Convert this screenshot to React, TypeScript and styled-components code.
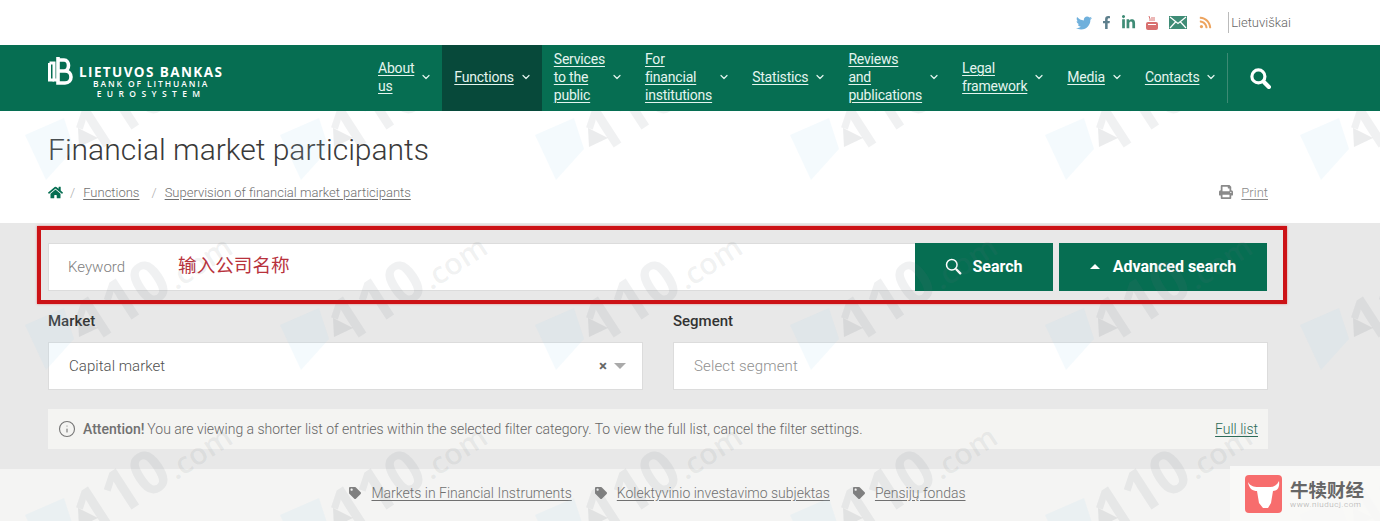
import React from 'react'
import styled, { createGlobalStyle } from 'styled-components'
import { ChevronDown, Info } from 'lucide-react'
import { FaFacebookF, FaHome, FaLinkedinIn, FaPrint, FaRss, FaTag, FaTwitter } from 'react-icons/fa'

const GlobalStyle = createGlobalStyle`
    html, body {
        margin: 0;
        padding: 0;
        background: #fff;
        font-family: Roboto, 'Noto Sans CJK SC', sans-serif;
    }
`
const Page = styled.div`
    position: relative;
    width: 1380px;
    height: 521px;
    overflow: hidden;
    color: #333;
`
const TopBar = styled.div`
    height: 45px;
    display: flex;
    justify-content: flex-end;
    align-items: center;
    padding-right: 89px;
    box-sizing: border-box;
`
const Socials = styled.div`
    display: flex;
    align-items: center;
    height: 21px;
    margin-right: 16px;
`
const Social = styled.a<{ $color: string; $gap: number }>`
    display: flex;
    color: ${p => p.$color};
    margin-right: ${p => p.$gap}px;
`
const Lang = styled.a`
    border-left: 1px solid #bbb;
    height: 21px;
    line-height: 21px;
    padding-left: 2px;
    font-size: 13px;
    font-weight: 300;
    color: #666;
`
const Header = styled.header`
    position: relative;
    z-index: 3;
    height: 66px;
    background: #066e52;
    display: flex;
    align-items: stretch;
    padding-left: 48px;
`
const Brand = styled.div`
    display: flex;
    align-items: flex-start;
    width: 318px;
    padding-top: 12px;
    box-sizing: border-box;
    color: #fff;
`
const BrandText = styled.div`
    margin-left: 5px;
    padding-top: 8px;
    font-family: 'Open Sans', sans-serif;
    text-align: center;
`
const BrandName = styled.div`
    font-size: 13.5px;
    line-height: 14px;
    font-weight: 700;
    letter-spacing: 1.4px;
    white-space: nowrap;
`
const BrandSub = styled.div<{ $spacing: number }>`
    font-size: 8.5px;
    line-height: 10px;
    font-weight: 600;
    letter-spacing: ${p => p.$spacing}px;
    white-space: nowrap;
`
const Nav = styled.nav`
    display: flex;
    align-items: stretch;
`
const NavItem = styled.div<{ $active?: boolean }>`
    display: flex;
    align-items: center;
    padding: 0 10px 2px 12px;
    background: ${p => (p.$active ? '#07493a' : 'transparent')};
    color: #e4f5ef;
    svg {
        margin-left: 6px;
    }
`
const NavLink = styled.a`
    font-size: 14px;
    line-height: 18px;
    letter-spacing: -0.2px;
    text-decoration: underline;
    text-underline-offset: 2px;
    text-decoration-thickness: 1px;
    white-space: nowrap;
`
const SearchSlot = styled.div`
    align-self: center;
    height: 50px;
    padding-left: 22px;
    border-left: 1px solid #3d8a74;
    display: flex;
    align-items: center;
`
const TitleArea = styled.div`
    height: 112px;
    padding: 20px 112px 0 48px;
    box-sizing: border-box;
`
const Title = styled.h1`
    margin: 0;
    font-size: 30px;
    line-height: 37px;
    font-weight: 300;
    color: #3a3a3a;
`
const CrumbRow = styled.div`
    display: flex;
    align-items: center;
    margin-top: 14px;
    height: 20px;
    font-size: 13px;
    font-weight: 300;
    color: #707070;
`
const CrumbLink = styled.a`
    text-decoration: underline;
    text-underline-offset: 2px;
`
const Slash = styled.span<{ $wide?: boolean }>`
    margin: 0 8px 0 ${p => (p.$wide ? 12 : 7)}px;
    color: #aaa;
`
const PrintLink = styled.div`
    margin-left: auto;
    display: flex;
    align-items: center;
    gap: 8px;
    color: #8a8a8a;
`
const Filters = styled.section`
    height: 246px;
    background: #e8e8e8;
    padding: 20px 112px 0 48px;
    box-sizing: border-box;
`
const SearchRow = styled.div`
    display: flex;
    height: 48px;
    margin-right: 1px;
`
const KeywordBox = styled.div`
    flex: 1;
    display: flex;
    align-items: center;
    background: #fff;
    border: 1px solid #dcdcdc;
    border-right: 0;
    box-sizing: border-box;
    padding-left: 19px;
    padding-bottom: 1px;
    font-size: 15px;
    font-weight: 300;
    color: #808080;
`
const Annotation = styled.span`
    margin-left: 53px;
    margin-top: -6px;
    font-size: 18.6px;
    font-weight: 400;
    color: #b8323c;
`
const ActionButton = styled.button<{ $width: number }>`
    width: ${p => p.$width}px;
    border: 0;
    background: #066e52;
    color: #fff;
    font-family: inherit;
    font-size: 16px;
    font-weight: 700;
    display: flex;
    align-items: center;
    justify-content: center;
    gap: 10px;
    padding: 0 0 2px;
`
const AdvancedButton = styled(ActionButton)`
    margin-left: 6px;
    gap: 13px;
`
const UpArrow = styled.span`
    width: 0;
    height: 0;
    border-left: 5px solid transparent;
    border-right: 5px solid transparent;
    border-bottom: 5px solid #fff;
`
const RedFrame = styled.div`
    position: absolute;
    z-index: 2;
    left: 37px;
    top: 226px;
    width: 1250px;
    height: 78px;
    box-sizing: border-box;
    border: 4px solid #cc1216;
    box-shadow: 0 0 2px rgba(220, 30, 30, 0.5);
`
const FieldGrid = styled.div`
    display: grid;
    grid-template-columns: 595px 595px;
    column-gap: 30px;
    margin-top: 20px;
`
const FieldLabel = styled.div`
    font-size: 15px;
    line-height: 20px;
    font-weight: 500;
    color: #333;
    margin-bottom: 11px;
`
const SelectBox = styled.div<{ $placeholder?: boolean }>`
    height: 48px;
    background: #fff;
    border: 1px solid #dcdcdc;
    box-sizing: border-box;
    padding: 0 16px 0 20px;
    display: flex;
    align-items: center;
    font-size: 15px;
    font-weight: 300;
    letter-spacing: ${p => (p.$placeholder ? 0.15 : 0.05)}px;
    color: ${p => (p.$placeholder ? '#909090' : '#505050')};
`
const ClearMark = styled.span`
    margin-left: auto;
    font-size: 15px;
    font-weight: 700;
    color: #666;
`
const DownArrow = styled.span`
    margin-left: 7px;
    width: 0;
    height: 0;
    border-left: 6px solid transparent;
    border-right: 6px solid transparent;
    border-top: 6px solid #aaa;
`
const Notice = styled.div`
    margin-top: 19px;
    height: 40px;
    background: #f4f4f2;
    display: flex;
    align-items: center;
    padding: 0 10px;
    font-size: 14px;
    font-weight: 300;
    letter-spacing: -0.01px;
    color: #666;
    svg {
        margin-right: 7px;
        color: #777;
    }
    strong {
        font-weight: 500;
        margin-right: 3px;
        color: #707070;
    }
`
const FullList = styled.a`
    margin-left: auto;
    color: #2c6a58;
    text-decoration: underline;
    text-underline-offset: 2px;
`
const TagStrip = styled.div`
    height: 52px;
    background: #f4f4f3;
    display: flex;
    justify-content: center;
    align-items: center;
    gap: 23px;
    padding: 0 65px 4px 0;
    box-sizing: border-box;
    font-size: 14px;
    font-weight: 300;
    color: #707070;
`
const TagLink = styled.a`
    display: flex;
    align-items: center;
    gap: 10px;
    span {
        text-decoration: underline;
        text-underline-offset: 2px;
    }
    svg {
        color: #808080;
    }
`
const Watermarks = styled.div`
    position: absolute;
    z-index: 1;
    inset: 0;
    padding: 15px 0 0 2px;
    display: grid;
    grid-template-columns: repeat(6, 255px);
    grid-auto-rows: 190px;
    pointer-events: none;
`
const Mark = styled.div`
    position: relative;
`
const MarkLogoSlot = styled.div`
    position: absolute;
    left: 20px;
    top: 100px;
    display: flex;
`
const MarkText = styled.div`
    position: absolute;
    left: 148px;
    top: 75px;
    transform: translate(-50%, -50%) rotate(-33deg);
    display: flex;
    align-items: baseline;
    color: rgba(110, 120, 125, 0.1);
    white-space: nowrap;
    font-family: 'Open Sans', sans-serif;
`
const MarkNumber = styled.span`
    font-size: 60px;
    font-weight: 700;
    letter-spacing: -1px;
`
const MarkSuffix = styled.span`
    font-size: 30px;
    font-weight: 600;
    margin-left: 2px;
`
const Badge = styled.div`
    position: absolute;
    z-index: 4;
    right: 0;
    bottom: 0;
    width: 150px;
    height: 55px;
    background: rgba(248, 248, 247, 0.92);
    display: flex;
    align-items: center;
    padding-left: 15px;
    box-sizing: border-box;
    gap: 8px;
`
const BadgeText = styled.div`
    display: flex;
    flex-direction: column;
`
const BadgeName = styled.div`
    font-family: 'Noto Sans CJK SC', sans-serif;
    font-size: 18.5px;
    line-height: 22px;
    font-weight: 700;
    color: #666;
`
const BadgeUrl = styled.div`
    font-size: 8px;
    line-height: 10px;
    letter-spacing: 0.6px;
    font-weight: 300;
    color: #aaa;
`

const navItems: { lines: string[]; active?: boolean }[] = [
    { lines: ['About', 'us'] },
    { lines: ['Functions'], active: true },
    { lines: ['Services', 'to the', 'public'] },
    { lines: ['For', 'financial', 'institutions'] },
    { lines: ['Statistics'] },
    { lines: ['Reviews', 'and', 'publications'] },
    { lines: ['Legal', 'framework'] },
    { lines: ['Media'] },
    { lines: ['Contacts'] },
]

const Magnifier: React.FC<{ size: number; stroke: number }> = ({ size, stroke }) => (
    <svg width={size} height={size} viewBox="0 0 20 20" fill="none" stroke="#fff">
        <circle cx="8" cy="8" r="6.2" strokeWidth={stroke} />
        <path d="M13.5 13.5 L18 18" strokeWidth={stroke + 1} strokeLinecap="round" />
    </svg>
)

const LogoMark = () => (
    <svg width="26" height="31" viewBox="0 0 26 31" fill="none" stroke="#fff">
        <path d="M1.5 6 H6 V23 H9" strokeWidth="3" />
        <path d="M1.5 6 V23 H6" strokeWidth="3" />
        <path d="M10 0 V26 H17 C25 26 25 14 17 14 H10 M10 3 H16 C22 3 22 14 16 14" strokeWidth="3.6" />
    </svg>
)

const MailIcon = () => (
    <svg width="18" height="13" viewBox="0 0 18 13">
        <rect width="18" height="13" fill="#3f8c76" />
        <path d="M1 1 L9 7.5 L17 1 M1 12 L6.5 6 M17 12 L11.5 6" fill="none" stroke="#fff" strokeWidth="1.2" />
    </svg>
)

const TubeIcon = () => (
    <svg width="12" height="14" viewBox="0 0 12 14">
        <path d="M3 0 L4 3 V5 M6 1 V5 M8 1 V5" stroke="#d9706f" strokeWidth="1" fill="none" />
        <rect y="6" width="12" height="8" rx="2" fill="#d9706f" />
        <rect x="2" y="8" width="8" height="1" fill="#fff" />
    </svg>
)

const MarkLogo = () => (
    <svg width="92" height="70" viewBox="0 0 92 70">
        <path d="M3 20 L42 3 L52 34 L24 65 Z" fill="rgba(170, 215, 240, 0.13)" />
        <path d="M56 13 L76 23 L57 32 Z" fill="rgba(110, 120, 125, 0.14)" />
    </svg>
)

const BullLogo = () => (
    <svg width="37" height="38" viewBox="0 0 37 38">
        <rect width="37" height="38" rx="4" fill="#f76d6d" />
        <path d="M3 7 C4 14 8 16 12 16 L14 28 L18 33 L23 33 L26 28 L28 16 C32 16 35 13 34 6 C32 10 29 12 25 12 H13 C9 12 5 11 3 7 Z" fill="#fff" />
    </svg>
)

const App: React.FC = () => {
    return (
        <Page>
            <GlobalStyle />
            <Watermarks>
                {Array.from({ length: 18 }, (_, i) => (
                    <Mark key={i}>
                        <MarkLogoSlot><MarkLogo /></MarkLogoSlot>
                        <MarkText>
                            <MarkNumber>110</MarkNumber>
                            <MarkSuffix>.com</MarkSuffix>
                        </MarkText>
                    </Mark>
                ))}
            </Watermarks>
            <TopBar>
                <Socials>
                    <Social $color="#6fb0dc" $gap={8}><FaTwitter size={16} /></Social>
                    <Social $color="#5d7f8c" $gap={8}><FaFacebookF size={13} /></Social>
                    <Social $color="#3f8c76" $gap={10}><FaLinkedinIn size={15} /></Social>
                    <Social $color="#d9706f" $gap={11}><TubeIcon /></Social>
                    <Social $color="#3f8c76" $gap={12}><MailIcon /></Social>
                    <Social $color="#eda45f" $gap={0}><FaRss size={13} /></Social>
                </Socials>
                <Lang>Lietuviškai</Lang>
            </TopBar>
            <Header>
                <Brand>
                    <LogoMark />
                    <BrandText>
                        <BrandName>LIETUVOS BANKAS</BrandName>
                        <BrandSub $spacing={1.9}>BANK OF LITHUANIA</BrandSub>
                        <BrandSub $spacing={5.4}>EUROSYSTEM</BrandSub>
                    </BrandText>
                </Brand>
                <Nav>
                    {navItems.map(item => (
                        <NavItem key={item.lines[0]} $active={item.active}>
                            <NavLink>
                                {item.lines.map((line, i) => (
                                    <React.Fragment key={line}>
                                        {i > 0 && <br />}
                                        {line}
                                    </React.Fragment>
                                ))}
                            </NavLink>
                            <ChevronDown size={12} strokeWidth={2.4} />
                        </NavItem>
                    ))}
                </Nav>
                <SearchSlot>
                    <Magnifier size={21} stroke={3} />
                </SearchSlot>
            </Header>
            <TitleArea>
                <Title>Financial market participants</Title>
                <CrumbRow>
                    <FaHome size={15} color="#066e52" />
                    <Slash>/</Slash>
                    <CrumbLink>Functions</CrumbLink>
                    <Slash $wide>/</Slash>
                    <CrumbLink>Supervision of financial market participants</CrumbLink>
                    <PrintLink>
                        <FaPrint size={14} />
                        <CrumbLink>Print</CrumbLink>
                    </PrintLink>
                </CrumbRow>
            </TitleArea>
            <Filters>
                <SearchRow>
                    <KeywordBox>
                        Keyword
                        <Annotation>输入公司名称</Annotation>
                    </KeywordBox>
                    <ActionButton $width={138}>
                        <Magnifier size={17} stroke={1.8} />
                        Search
                    </ActionButton>
                    <AdvancedButton $width={208}>
                        <UpArrow />
                        Advanced search
                    </AdvancedButton>
                </SearchRow>
                <FieldGrid>
                    <div>
                        <FieldLabel>Market</FieldLabel>
                        <SelectBox>
                            Capital market
                            <ClearMark>×</ClearMark>
                            <DownArrow />
                        </SelectBox>
                    </div>
                    <div>
                        <FieldLabel>Segment</FieldLabel>
                        <SelectBox $placeholder>Select segment</SelectBox>
                    </div>
                </FieldGrid>
                <Notice>
                    <Info size={18} strokeWidth={1.5} />
                    <strong>Attention!</strong>
                    You are viewing a shorter list of entries within the selected filter category. To view the full list, cancel the filter settings.
                    <FullList>Full list</FullList>
                </Notice>
            </Filters>
            <RedFrame />
            <TagStrip>
                <TagLink><FaTag size={12} /><span>Markets in Financial Instruments</span></TagLink>
                <TagLink><FaTag size={12} /><span>Kolektyvinio investavimo subjektas</span></TagLink>
                <TagLink><FaTag size={12} /><span>Pensijų fondas</span></TagLink>
            </TagStrip>
            <Badge>
                <BullLogo />
                <BadgeText>
                    <BadgeName>牛犊财经</BadgeName>
                    <BadgeUrl>www.niuducj.com</BadgeUrl>
                </BadgeText>
            </Badge>
        </Page>
    )
}

export default App
